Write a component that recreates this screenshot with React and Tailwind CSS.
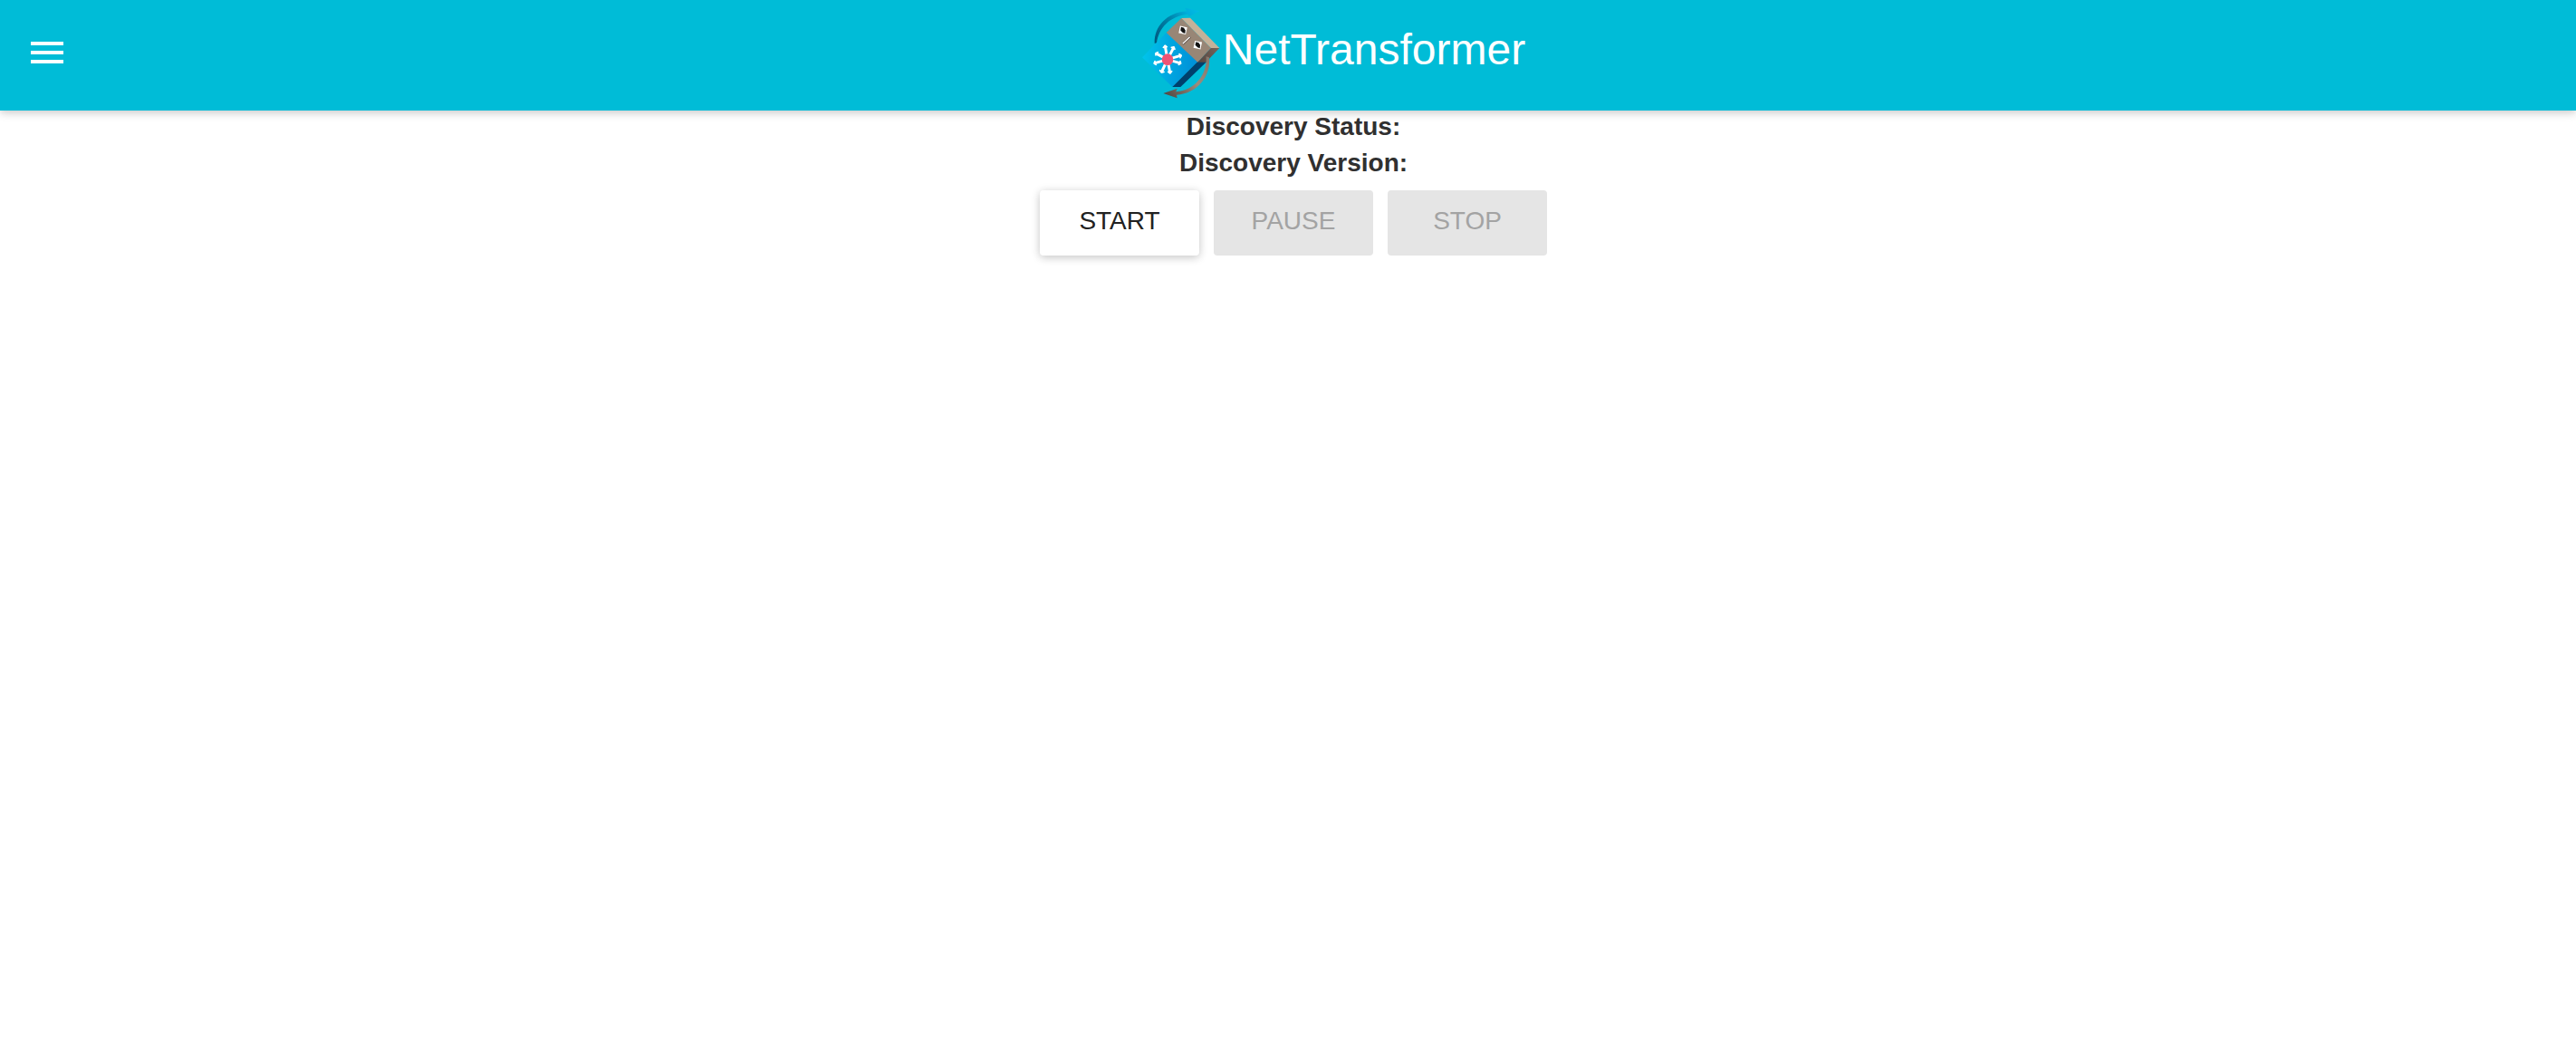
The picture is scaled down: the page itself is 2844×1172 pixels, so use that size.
function Logo() {
  return (
    <svg viewBox="15 0 270 336" className="h-28 w-[90px] shrink-0" role="img" aria-label="NetTransformer logo">
      <defs>
        <linearGradient id="front" x1="20" y1="190" x2="190" y2="200" gradientUnits="userSpaceOnUse">
          <stop offset="0" stopColor="#00c4ea" />
          <stop offset="0.55" stopColor="#00a5e0" />
          <stop offset="1" stopColor="#0092d8" />
        </linearGradient>
        <linearGradient id="arcTop" x1="62" y1="140" x2="205" y2="35" gradientUnits="userSpaceOnUse">
          <stop offset="0" stopColor="#00587f" />
          <stop offset="0.5" stopColor="#0086ac" />
          <stop offset="0.8" stopColor="#00aedb" />
          <stop offset="1" stopColor="#00bce4" />
        </linearGradient>
        <linearGradient id="arcBottom" x1="235" y1="190" x2="95" y2="310" gradientUnits="userSpaceOnUse">
          <stop offset="0" stopColor="#85776c" />
          <stop offset="0.45" stopColor="#9b8c7c" />
          <stop offset="1" stopColor="#554a45" />
        </linearGradient>
        <linearGradient id="side" x1="200" y1="200" x2="272" y2="160" gradientUnits="userSpaceOnUse">
          <stop offset="0" stopColor="#55453f" />
          <stop offset="1" stopColor="#74635a" />
        </linearGradient>
      </defs>
      <path d="M59 143 C58 88 98 42 166 37 L160 26 L208 37 L174 54 L169 47 C110 53 72 92 66 143 Z" fill="url(#arcTop)" />
      <path d="M18 190 L98 108 L202 204 L118 288 Z" fill="url(#front)" />
      <path d="M118 288 L202 204 L232 190 L232 204 L145 288 Z" fill="#00406c" />
      <path d="M98 108 L148 60 L246 159 L202 206 Z" fill="#988676" />
      <path d="M148 60 L177 59 L274 159 L246 159 Z" fill="#c5b199" />
      <path d="M202 206 L246 159 L274 159 L229 206 Z" fill="url(#side)" />
      <path d="M230 187 C235 248 190 300 130 304 L134 293 L88 309 L134 325 L132 314 C200 311 247 252 240 190 Z" fill="url(#arcBottom)" />
      <g transform="translate(153 100) rotate(12)">
        <rect x="-12" y="-12" width="24" height="24" fill="#fff" />
        <path d="M-8 -9 L2 -8 L8 -2 L9 9 L1 8 L-8 2 Z" fill="#111" />
        <path d="M2 -8 L8 -10 L8 -3 Z" fill="#fff" />
      </g>
      <g transform="translate(202 149) rotate(12)">
        <rect x="-12" y="-12" width="24" height="24" fill="#fff" />
        <path d="M-8 -9 L2 -8 L8 -2 L9 9 L1 8 L-8 2 Z" fill="#111" />
        <path d="M2 -8 L8 -10 L8 -3 Z" fill="#fff" />
      </g>
      <path d="M152 146 L177 122" stroke="#51433d" strokeWidth="7" />
      <path d="M152 145 L176 122" stroke="#fff" strokeWidth="4" />
      <g stroke="#fff" strokeWidth="9" strokeLinecap="round" fill="none">
        <path d="M102 197 L94 153 M102 197 L122 158 M102 197 L145 184 M102 197 L143 209 M102 197 L110 240 M102 197 L83 237 M102 197 L60 209 M102 197 L66 178" />
        <path
          d="M88 157 L94 152 L100 155 M115 157 L123 156 L126 163 M141 179 L147 184 L144 191 M144 203 L146 210 L139 214 M104 238 L111 242 L116 236 M77 233 L82 240 L90 238 M60 203 L58 210 L64 214 M70 173 L63 176 L63 183"
          strokeWidth="5"
          strokeLinejoin="round"
        />
      </g>
      <circle cx="102" cy="197" r="19" fill="#ee5475" />
    </svg>
  );
}

const actions = [
  { label: "START", enabled: true },
  { label: "PAUSE", enabled: false },
  { label: "STOP", enabled: false },
];

export default function App() {
  return (
    <div className="min-h-screen bg-white font-['Liberation_Sans',Arial,sans-serif]">
      <header className="relative flex h-[122px] items-start bg-[#00bcd7] px-4 shadow-[0_2px_12px_rgba(0,0,0,0.12),0_2px_8px_rgba(0,0,0,0.12)]">
        <button type="button" aria-label="Open menu" className="mt-2.5 flex size-24 items-center pl-3">
          <svg viewBox="0 0 24 24" className="size-12 fill-white" aria-hidden="true">
            <path d="M3 18h18v-2H3v2zm0-5h18v-2H3v2zm0-7v2h18V6H3z" />
          </svg>
        </button>
        <div className="flex flex-1 items-start justify-center pl-1">
          <Logo />
          <h1 className="text-[48px] leading-[110px] text-white">NetTransformer</h1>
        </div>
      </header>
      <main className="flex flex-col items-center pl-3">
        <div className="flex flex-col items-center gap-1 text-[28px] leading-9 font-bold text-[#303030]">
          <p>Discovery Status:</p>
          <p>Discovery Version:</p>
        </div>
        <div className="mt-3 flex gap-4">
          {actions.map(({ label, enabled }) => (
            <button
              key={label}
              type="button"
              disabled={!enabled}
              className="flex h-18 w-44 items-start justify-center rounded-sm bg-white pt-4 text-[28px] leading-9 text-[#212121] shadow-[0_2px_12px_rgba(0,0,0,0.12),0_2px_8px_rgba(0,0,0,0.12)] disabled:bg-[#e5e5e5] disabled:text-[#a3a3a3] disabled:shadow-none"
            >
              {label}
            </button>
          ))}
        </div>
      </main>
    </div>
  );
}
